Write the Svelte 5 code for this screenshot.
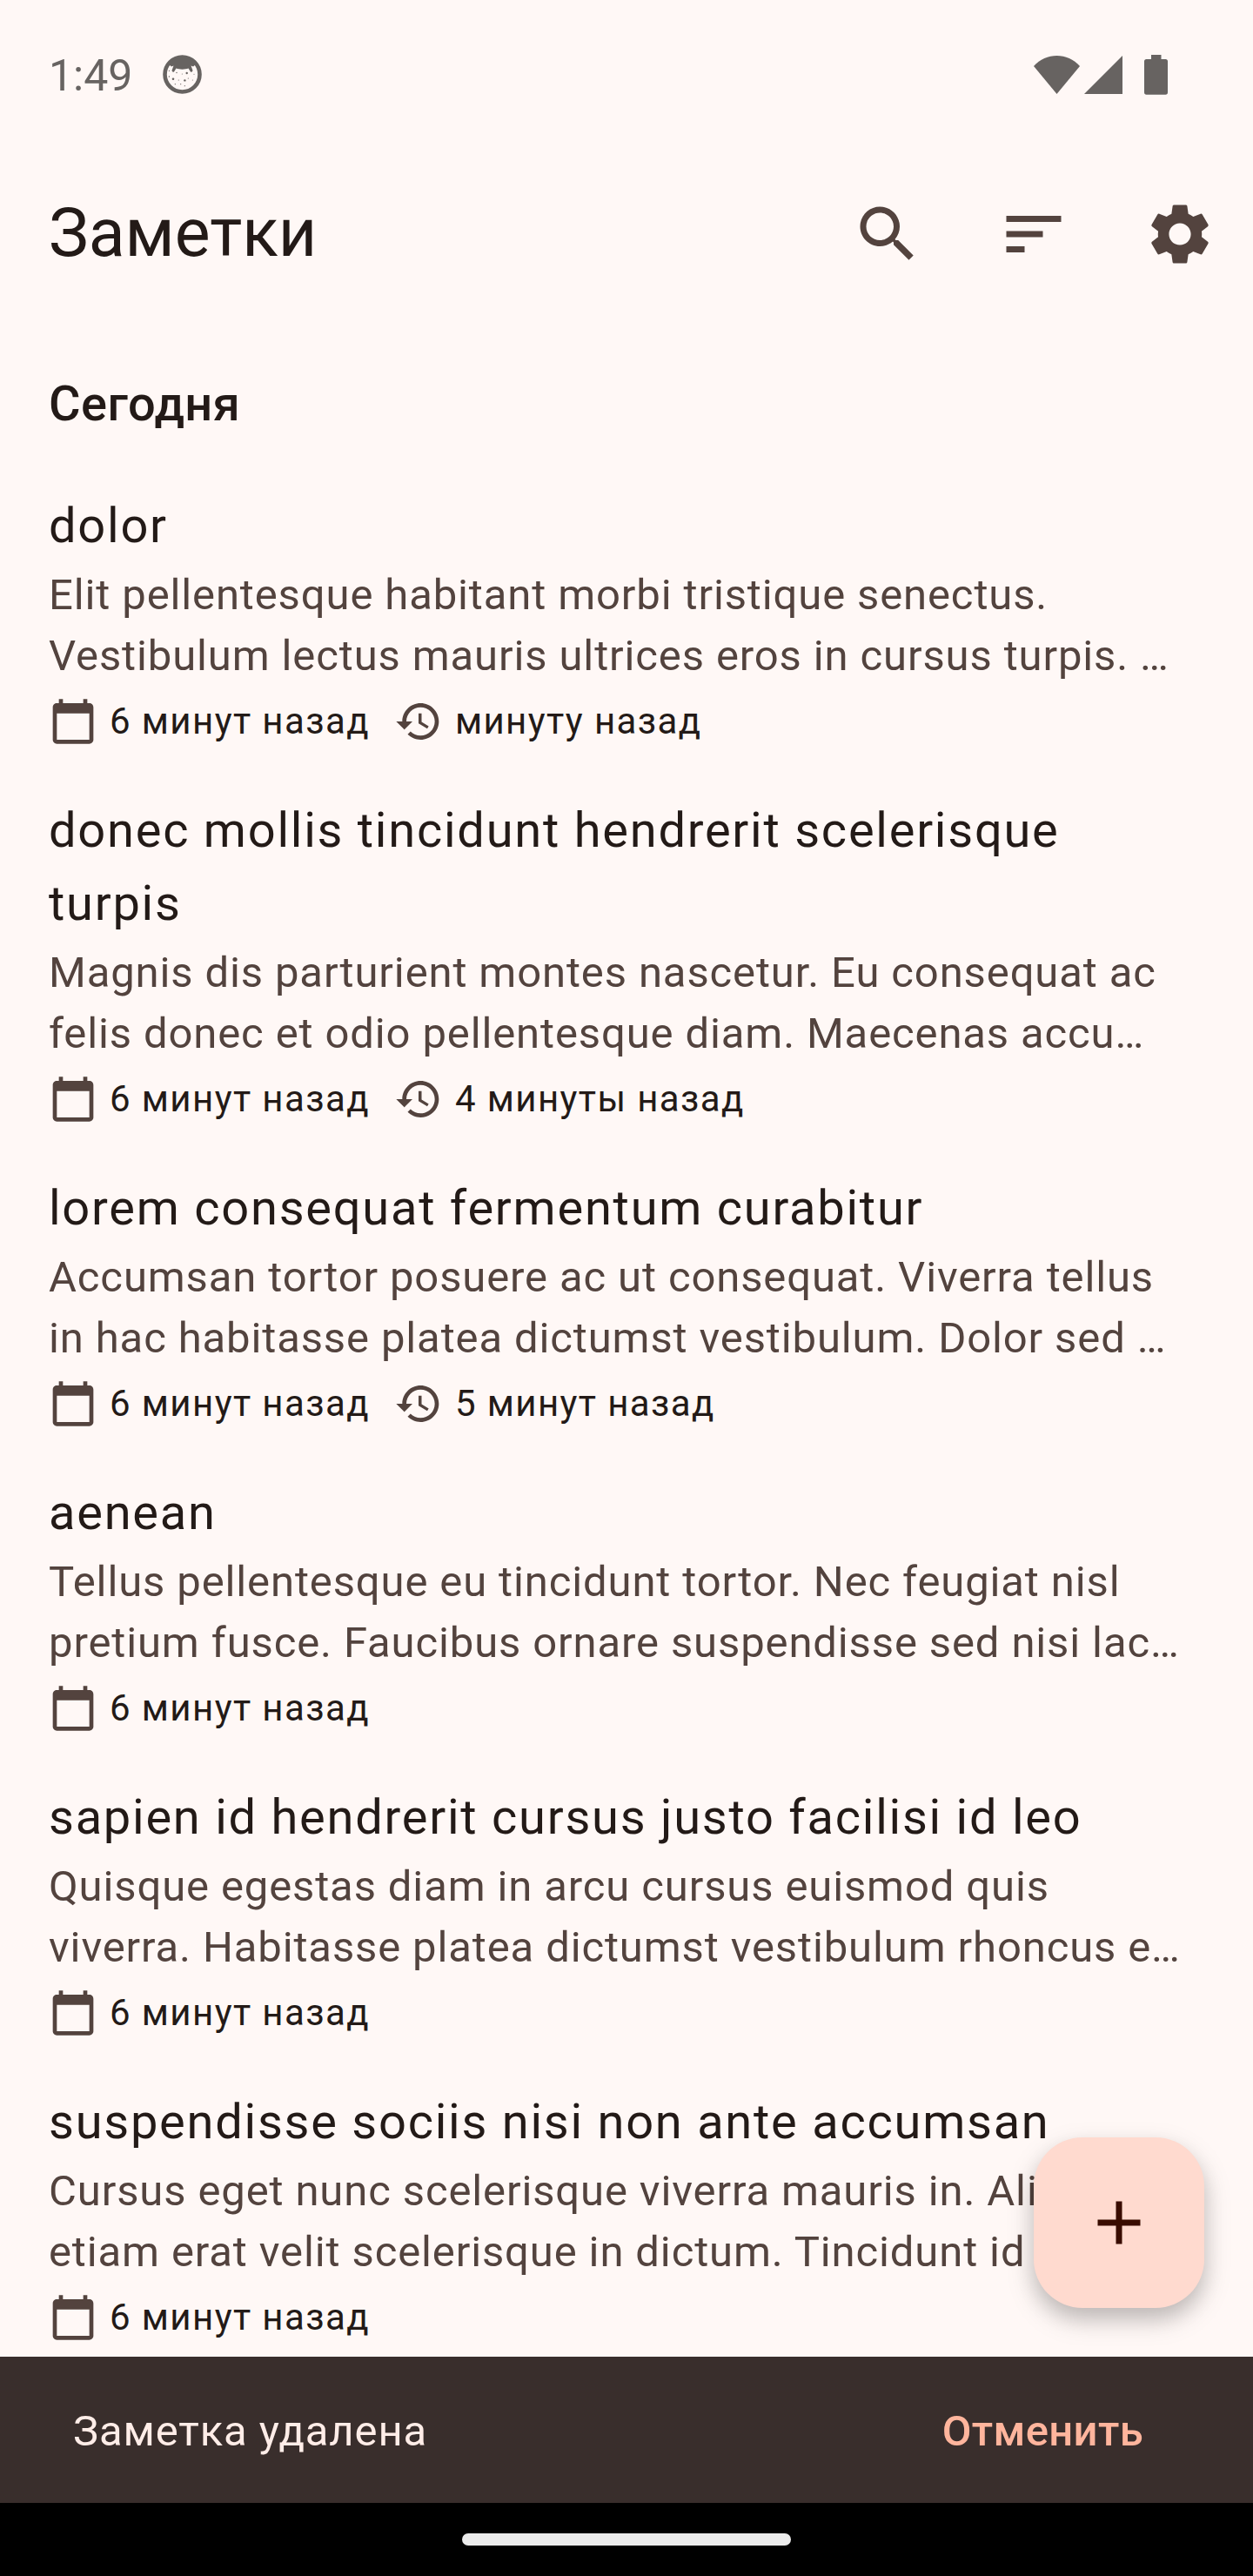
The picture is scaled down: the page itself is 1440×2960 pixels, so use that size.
<script>
  const created = '6 минут назад';
  const notes = [
    {
      title: ['dolor'],
      body: ['Elit pellentesque habitant morbi tristique senectus.', 'Vestibulum lectus mauris ultrices eros in cursus turpis. …'],
      edited: 'минуту назад'
    },
    {
      title: ['donec mollis tincidunt hendrerit scelerisque', 'turpis'],
      body: ['Magnis dis parturient montes nascetur. Eu consequat ac', 'felis donec et odio pellentesque diam. Maecenas accu…'],
      edited: '4 минуты назад'
    },
    {
      title: ['lorem consequat fermentum curabitur'],
      body: ['Accumsan tortor posuere ac ut consequat. Viverra tellus', 'in hac habitasse platea dictumst vestibulum. Dolor sed …'],
      edited: '5 минут назад'
    },
    {
      title: ['aenean'],
      body: ['Tellus pellentesque eu tincidunt tortor. Nec feugiat nisl', 'pretium fusce. Faucibus ornare suspendisse sed nisi lac…']
    },
    {
      title: ['sapien id hendrerit cursus justo facilisi id leo'],
      body: ['Quisque egestas diam in arcu cursus euismod quis', 'viverra. Habitasse platea dictumst vestibulum rhoncus e…']
    },
    {
      title: ['suspendisse sociis nisi non ante accumsan'],
      body: ['Cursus eget nunc scelerisque viverra mauris in. Ali', 'etiam erat velit scelerisque in dictum. Tincidunt id']
    }
  ];
  // Speckles on the notification face: x, y, radius
  const speckles = [
    [12, 27.7, 1.3], [25.4, 29.4, 1.2], [27.7, 21, 1.2], [7.4, 18.3, 0.6], [7.4, 25, 0.7],
    [16, 20.5, 0.7], [22.3, 22, 0.5], [29.3, 27, 0.6], [34.3, 29, 0.5], [36, 22.3, 0.5],
    [18.3, 29, 0.6], [14.3, 33.7, 0.6], [20.7, 33.7, 0.6], [25.3, 35.7, 0.6]
  ];
  const actions = [
    { name: 'Поиск', path: 'M15.5 14h-.79l-.28-.27C15.41 12.59 16 11.11 16 9.5 16 5.91 13.09 3 9.5 3S3 5.91 3 9.5 5.91 16 9.5 16c1.61 0 3.09-.59 4.23-1.57l.27.28v.79l5 4.99L20.49 19l-4.99-5zm-6 0C7.01 14 5 11.99 5 9.5S7.01 5 9.5 5 14 7.01 14 9.5 11.99 14 9.5 14z' },
    { name: 'Сортировка', path: 'M3 18h6v-2H3v2zM3 6v2h18V6H3zm0 7h12v-2H3v2z' },
    { name: 'Настройки', path: 'M19.14 12.94c.04-.3.06-.61.06-.94 0-.32-.02-.64-.07-.94l2.03-1.58c.18-.14.23-.41.12-.61l-1.92-3.32c-.12-.22-.37-.29-.59-.22l-2.39.96c-.5-.38-1.03-.7-1.62-.94l-.36-2.54c-.04-.24-.24-.41-.48-.41h-3.84c-.24 0-.43.17-.47.41l-.36 2.54c-.59.24-1.13.57-1.62.94l-2.39-.96c-.22-.08-.47 0-.59.22L2.74 8.87c-.12.21-.08.47.12.61l2.03 1.58c-.05.3-.09.63-.09.94s.02.64.07.94l-2.03 1.58c-.18.14-.23.41-.12.61l1.92 3.32c.12.22.37.29.59.22l2.39-.96c.5.38 1.03.7 1.62.94l.36 2.54c.05.24.24.41.48.41h3.84c.24 0 .44-.17.47-.41l.36-2.54c.59-.24 1.13-.56 1.62-.94l2.39.96c.22.08.47 0 .59-.22l1.92-3.32c.12-.22.07-.47-.12-.61l-2.01-1.58zM12 15.6c-1.98 0-3.6-1.62-3.6-3.6s1.62-3.6 3.6-3.6 3.6 1.62 3.6 3.6-1.62 3.6-3.6 3.6z' }
  ];
</script>

<div class="screen">
  <header class="status">
    <span class="clock">1:49</span>
    <svg class="cat" viewBox="0 0 45 45">
      <circle class="face" cx="22.5" cy="22.5" r="20" />
      <path d="M6 10C13 2 32 2 39 10L35 13.500 32.500 12.500 34.500 18Q34 20.500 32 19.500L29.500 15.500C26 17 19 17 15.500 15.500L13 19.500Q11 20.500 10.500 18L12.500 12.500 10 13.500Z" />
      {#each speckles as [x, y, r]}
        <circle cx={x} cy={y} {r} />
      {/each}
    </svg>
    <div class="indicators">
      <svg class="wifi" viewBox="0 0 53 44"><path d="M26.5 44 0 12C14-4 39-4 53 12Z" /></svg>
      <svg class="signal" viewBox="0 0 44 44"><path d="M0 44H44V0Z" /></svg>
      <svg class="battery" viewBox="0 0 27 46"><path d="M8 0H19.5V5H24.5Q27 5 27 7.500V43Q27 45.700 24.500 45.700H2.500Q0 45.700 0 43V7.500Q0 5 2.500 5H8Z" /></svg>
    </div>
  </header>

  <div class="appbar">
    <h1>Заметки</h1>
    <div class="actions">
      {#each actions as action}
        <button aria-label={action.name}><svg viewBox="0 0 24 24"><path d={action.path} /></svg></button>
      {/each}
    </div>
  </div>

  <main>
    <h2>Сегодня</h2>
    {#each notes as note}
      <article>
        <h3>{#each note.title as line}<span>{line}</span>{/each}</h3>
        <p>{#each note.body as line}<span>{line}</span>{/each}</p>
        <div class="meta">
          <svg viewBox="0 0 24 24"><path d="M20 3h-1V1h-2v2H7V1H5v2H4c-1.100 0-2 .9-2 2v16c0 1.100.9 2 2 2h16c1.100 0 2-.9 2-2V5c0-1.100-.9-2-2-2zm0 18H4V8h16v13z" /></svg>
          <time>{created}</time>
          {#if note.edited}
            <svg class="history" viewBox="0 0 24 24"><path d="M13 3c-4.970 0-9 4.030-9 9H1l3.890 3.890.07.14L9 12H6c0-3.870 3.130-7 7-7s7 3.130 7 7-3.130 7-7 7c-1.930 0-3.680-.79-4.940-2.060l-1.420 1.420C8.270 19.990 10.510 21 13 21c4.970 0 9-4.030 9-9s-4.030-9-9-9zm-1 5v5l4.280 2.540.72-1.210-3.500-2.080V8H12z" /></svg>
            <time>{note.edited}</time>
          {/if}
        </div>
      </article>
    {/each}
  </main>

  <button class="fab" aria-label="Новая заметка"><svg viewBox="0 0 24 24"><path d="M19 13h-6v6h-2v-6H5v-2h6V5h2v6h6v2z" /></svg></button>

  <div class="snackbar">
    <span>Заметка удалена</span>
    <button>Отменить</button>
  </div>
  <footer><i></i></footer>
</div>

<style>
  :global(body) { margin: 0; background: #fff8f6; }
  .screen {
    position: relative;
    display: flex;
    flex-direction: column;
    width: 1440px;
    height: 2960px;
    overflow: hidden;
    background: #fff8f6;
    color: #231a17;
    font-family: Roboto, 'Noto Sans', sans-serif;
  }
  button { border: 0; padding: 0; background: none; font: inherit; color: inherit; }
  svg { display: block; flex: none; fill: currentColor; }
  h1, h2, h3, p { margin: 0; font-weight: 400; }

  .status {
    display: flex;
    flex: none;
    align-items: center;
    box-sizing: border-box;
    height: 171px;
    padding: 0 98px 0 56px;
    color: #676361;
  }
  .clock { width: 131px; margin-top: 3px; font-size: 50px; line-height: 58px; }
  .cat { width: 45px; height: 45px; }
  .cat .face { fill: none; stroke: currentColor; stroke-width: 4.6; }
  .indicators { display: flex; align-items: center; margin-left: auto; }
  .wifi { width: 53px; height: 44px; }
  .signal { width: 44px; height: 44px; margin: 0 25px 0 5px; }
  .battery { width: 27px; height: 46px; }

  .appbar {
    display: flex;
    flex: none;
    justify-content: space-between;
    align-items: center;
    height: 196px;
    padding: 0 0 0 56px;
  }
  h1 { margin-bottom: 2px; font-size: 77px; line-height: 98px; }
  .actions { display: flex; }
  .actions button { display: grid; place-items: center; width: 168px; height: 168px; color: #53433e; }
  .actions svg { width: 84px; height: 84px; }

  main { flex: 1; min-height: 0; overflow: hidden; padding: 55px 56px 0; }
  h2 { height: 140px; font-size: 56px; line-height: 84px; font-weight: 500; letter-spacing: 0.525px; }
  article { padding-bottom: 55px; }
  h3 { font-size: 56px; line-height: 84px; letter-spacing: 1.75px; }
  h3 span, p span { display: block; white-space: nowrap; }
  p { margin: 3px 0 12px; font-size: 49px; line-height: 70px; letter-spacing: 0.875px; color: #53433e; }
  .meta { display: flex; align-items: center; height: 56px; }
  .meta svg { width: 56px; height: 56px; margin-right: 14px; color: #53433e; }
  .meta .history { margin-left: 28px; }
  time { font-size: 42px; line-height: 56px; letter-spacing: 1.4px; white-space: nowrap; }

  .fab {
    position: absolute;
    right: 56px;
    bottom: 308px;
    display: grid;
    place-items: center;
    width: 196px;
    height: 196px;
    border-radius: 56px;
    background: #ffdacf;
    color: #390c00;
    box-shadow: 0 13px 32px rgba(0, 0, 0, 0.17), 0 12px 22px rgba(0, 0, 0, 0.12);
  }
  .fab svg { width: 84px; height: 84px; }

  .snackbar {
    position: relative;
    display: flex;
    flex: none;
    justify-content: space-between;
    align-items: center;
    box-sizing: border-box;
    height: 168px;
    padding: 4px 126px 0 84px;
    background: #392e2c;
    color: #ffede8;
    font-size: 49px;
    line-height: 70px;
    letter-spacing: 0.875px;
  }
  .snackbar button { color: #ffb59d; font-weight: 500; letter-spacing: 0.35px; }
  footer { display: grid; flex: none; place-items: center; height: 84px; background: #000; }
  footer i { width: 378px; height: 14px; border-radius: 7px; background: #ebebeb; }
</style>
